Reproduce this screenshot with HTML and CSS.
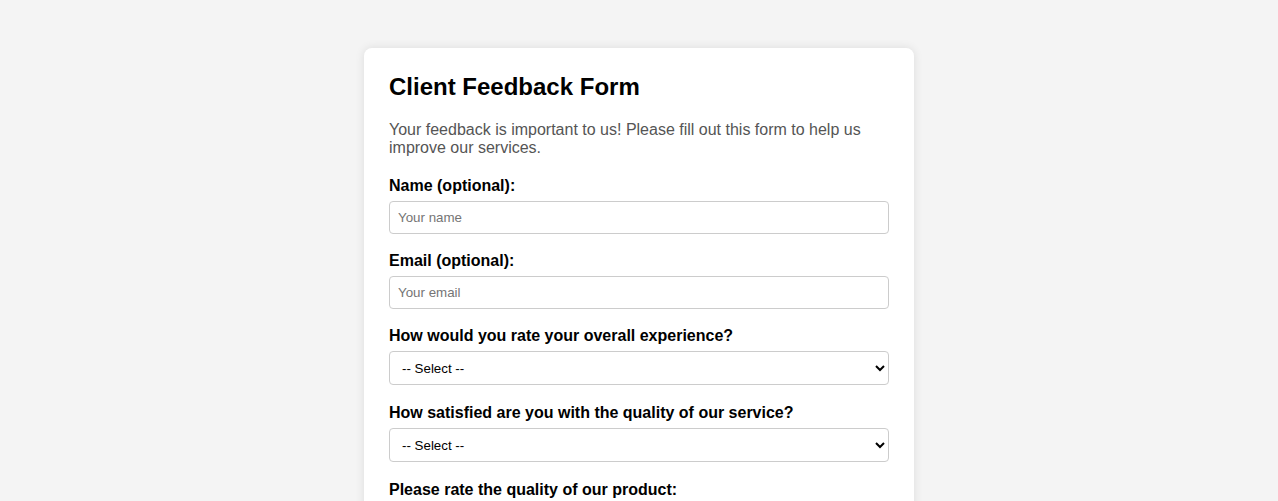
FILE: index.html
```html
<!DOCTYPE html>
<html lang="en">
<head>
<meta charset="utf-8">
<title>Client Feedback Form</title>
<link rel="stylesheet" href="styles.css">
</head>
<body>
<div class="container">
  <h2 class="title">Client Feedback Form</h2>
  <p class="intro">Your feedback is important to us! Please fill out this form to help us improve our services.</p>
  <form class="form">
    <div class="group">
      <label class="label" for="name">Name (optional):</label>
      <input class="field" type="text" id="name" placeholder="Your name">
    </div>
    <div class="group">
      <label class="label" for="email">Email (optional):</label>
      <input class="field" type="email" id="email" placeholder="Your email">
    </div>
    <div class="group group-select">
      <label class="label" for="exp">How would you rate your overall experience?</label>
      <select class="field select" id="exp">
        <option>-- Select --</option>
        <option>Excellent</option>
        <option>Good</option>
        <option>Average</option>
        <option>Poor</option>
      </select>
    </div>
    <div class="group group-select">
      <label class="label" for="sat">How satisfied are you with the quality of our service?</label>
      <select class="field select" id="sat">
        <option>-- Select --</option>
        <option>Very satisfied</option>
        <option>Satisfied</option>
        <option>Neutral</option>
        <option>Dissatisfied</option>
      </select>
    </div>
    <div class="group group-select">
      <label class="label" for="prod">Please rate the quality of our product:</label>
      <select class="field select" id="prod">
        <option>-- Select --</option>
        <option>Excellent</option>
        <option>Good</option>
        <option>Average</option>
        <option>Poor</option>
      </select>
    </div>
  </form>
</div>
</body>
</html>
```

FILE: styles.css
```css
html, body {
  margin: 0;
  padding: 0;
}
body {
  background: #f4f4f4;
  font-family: "Liberation Sans", Arial, sans-serif;
  color: #000;
  padding: 48px 0 40px;
}
.container {
  width: 550px;
  box-sizing: border-box;
  margin: 0 auto;
  background: #fff;
  border-radius: 8px;
  padding: 25px;
  box-shadow: 0 0 10px rgba(0, 0, 0, 0.1);
}
.title {
  margin: 0 0 20px;
  font-size: 24px;
  font-weight: bold;
  color: #000;
}
.intro {
  margin: 0 0 20px;
  font-size: 16px;
  color: #555;
}
.form {
  margin: 0;
}
.group {
  display: flex;
  flex-direction: column;
  margin-bottom: 18px;
}
.group-select {
  margin-bottom: 19px;
}
.label {
  font-size: 16px;
  font-weight: bold;
  margin-bottom: 6px;
}
.field {
  box-sizing: border-box;
  width: 100%;
  padding: 8px;
  border: 1px solid #ccc;
  border-radius: 4px;
  font-family: "Liberation Sans", Arial, sans-serif;
  font-size: 13.333px;
  height: 33px;
  background: #fff;
  color: #000;
}
.field::placeholder {
  color: #757575;
}
.select {
  height: 34px;
}
```
